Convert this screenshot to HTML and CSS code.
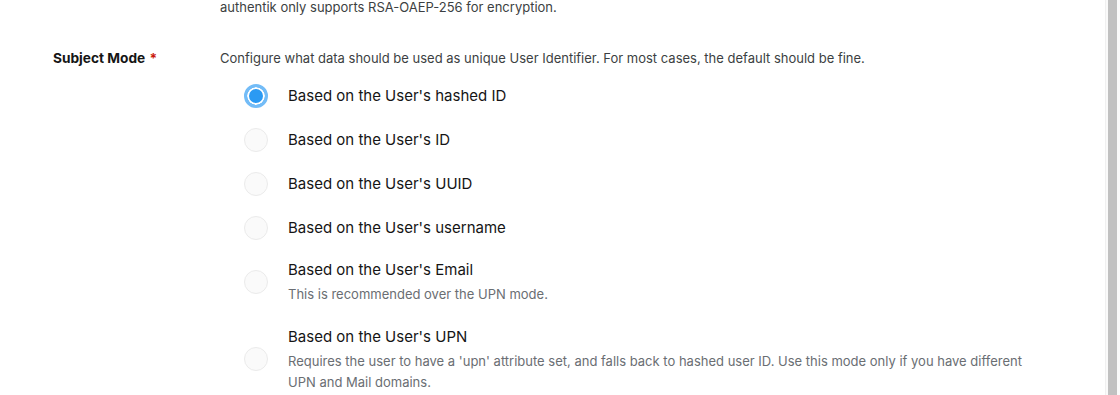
FILE: index.html
```html
<!DOCTYPE html>
<html lang="en">
<head>
    <meta charset="UTF-8">
    <meta name="viewport" content="width=device-width, initial-scale=1.0">
    <title>Subject Mode</title>
    <link rel="stylesheet" href="styles.css">
</head>
<body>

    <div class="page">
        <div class="content">
            <div class="form-group">
                <div></div>
                <div class="helper top-helper">authentik only supports RSA-OAEP-256 for encryption.</div>
            </div>

            <div class="form-group subject">
                <div class="label">Subject Mode <span class="required">*</span></div>
                <div class="control">
                    <div class="helper">Configure what data should be used as unique User Identifier. For most cases, the default should be fine.</div>

                    <div class="radio-list">
                        <label class="radio">
                            <span class="circle checked"></span>
                            <span class="radio-text">
                                <span class="radio-label">Based on the User's hashed ID</span>
                            </span>
                        </label>
                        <label class="radio">
                            <span class="circle"></span>
                            <span class="radio-text">
                                <span class="radio-label">Based on the User's ID</span>
                            </span>
                        </label>
                        <label class="radio">
                            <span class="circle"></span>
                            <span class="radio-text">
                                <span class="radio-label">Based on the User's UUID</span>
                            </span>
                        </label>
                        <label class="radio">
                            <span class="circle"></span>
                            <span class="radio-text">
                                <span class="radio-label">Based on the User's username</span>
                            </span>
                        </label>
                        <label class="radio with-desc">
                            <span class="circle"></span>
                            <span class="radio-text">
                                <span class="radio-label">Based on the User's Email</span>
                                <span class="radio-desc">This is recommended over the UPN mode.</span>
                            </span>
                        </label>
                        <label class="radio">
                            <span class="circle"></span>
                            <span class="radio-text">
                                <span class="radio-label">Based on the User's UPN</span>
                                <span class="radio-desc">Requires the user to have a 'upn' attribute set, and falls back to hashed user ID. Use this mode only if you have different UPN and Mail domains.</span>
                            </span>
                        </label>
                    </div>
                </div>
            </div>
        </div>

        <div class="scrollbar">
            <div class="thumb"></div>
        </div>
    </div>

</body>
</html>
```

FILE: styles.css
```css
body {
    margin: 0;
    background: #fff;
    font-family: Inter, 'Noto Sans', sans-serif;
    color: #151515;
    overflow: hidden;
}

.page {
    display: flex;
    height: 395px;
}

.content {
    flex: 1;
}

.form-group {
    display: grid;
    grid-template-columns: 220px 1fr;
}

.top-helper {
    margin-top: -3px;
}

.subject {
    margin-top: 31px;
}

.label {
    padding-left: 53px;
    font-size: 13.7px;
    font-weight: 700;
    line-height: 20px;
    color: #151515;
}

.required {
    color: #c9190b;
    margin-left: 1px;
}

.helper {
    font-size: 13px;
    line-height: 20px;
    color: #3c3f42;
}

.radio-list {
    display: flex;
    flex-direction: column;
    gap: 20px;
    margin-top: 16px;
    padding-left: 24px;
}

.radio {
    display: flex;
    align-items: center;
    gap: 20px;
}

.radio.with-desc {
    margin-top: -2px;
}

.circle {
    flex: none;
    box-sizing: border-box;
    width: 24px;
    height: 24px;
    border-radius: 50%;
    border: 1px solid #ebebeb;
    background: #fafafa;
}

.circle.checked {
    border: 3px solid #73bcf7;
    background: #2b9af3;
    box-shadow: inset 0 0 0 2px #fff;
}

.radio-text {
    display: flex;
    flex-direction: column;
    max-width: 750px;
}

.radio-label {
    font-size: 15px;
    line-height: 24px;
    color: #151515;
}

.radio-desc {
    margin-top: 2px;
    font-size: 13px;
    line-height: 21px;
    color: #6a6e73;
}

.scrollbar {
    width: 15px;
    background: #fafafa;
    border-left: 1px solid #f0f0f0;
    box-sizing: border-box;
    padding: 0 3px 0 2px;
}

.thumb {
    height: 100%;
    background: #c1c1c1;
}
```
